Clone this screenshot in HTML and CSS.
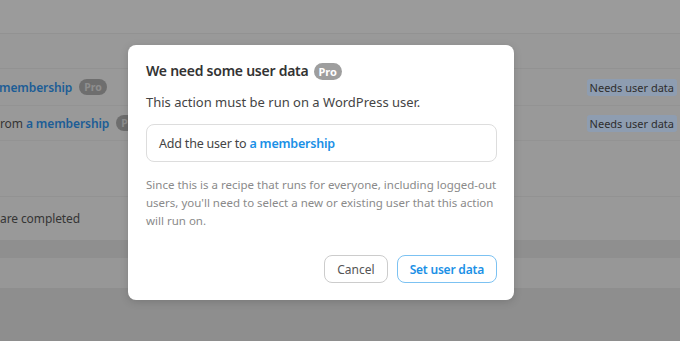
FILE: index.html
```html
<!DOCTYPE html>
<html lang="en">
<head>
<meta charset="utf-8">
<title>Recipe</title>
<link rel="stylesheet" href="styles.css">
</head>
<body>
<div class="page">
  <div class="topbar"></div>
  <div class="subbar"></div>
  <div class="row row-a">
    <div class="row-text"><span class="link">membership</span><span class="badge">Pro</span></div>
    <span class="tag">Needs user data</span>
  </div>
  <div class="row row-b">
    <div class="row-text">rom <span class="link">a membership</span><span class="badge">Pro</span></div>
    <span class="tag">Needs user data</span>
  </div>
  <div class="gap-block"></div>
  <div class="row row-c">
    <div class="row-text">are completed</div>
  </div>
  <div class="band"></div>
  <div class="band-light"></div>
  <div class="rest"></div>
</div>

<div class="modal">
  <div class="modal-title">We need some user data <span class="pill">Pro</span></div>
  <p class="modal-lead">This action must be run on a WordPress user.</p>
  <div class="action-box">Add the user to <span class="action-link">a membership</span></div>
  <p class="modal-note">Since this is a recipe that runs for everyone, including <span class="nowrap">logged-out</span> users, you'll need to select a new or existing user that this action will run on.</p>
  <div class="modal-actions">
    <button class="btn btn-cancel">Cancel</button>
    <button class="btn btn-primary">Set user data</button>
  </div>
</div>
</body>
</html>
```
FILE: styles.css
```css
html, body {
  margin: 0;
  padding: 0;
  height: 100%;
}
body {
  background: #8e8e8e;
  font-family: "Noto Sans", "Open Sans", sans-serif;
  overflow: hidden;
}
.page {
  display: flex;
  flex-direction: column;
  height: 341px;
}
.topbar {
  height: 33px;
  background: #9b9b9b;
  border-bottom: 1px solid #929292;
}
.subbar {
  height: 34px;
  background: #999999;
  border-bottom: 1px solid #929292;
}
.row {
  display: flex;
  align-items: center;
  justify-content: space-between;
  background: #999999;
  border-bottom: 1px solid #939393;
  padding-right: 3px;
  font-size: 12px;
  letter-spacing: -0.1px;
  color: #353535;
}
.row-a { height: 36px; }
.row-b { height: 34px; }
.row-c { height: 43px; border-bottom: none; }
.row-text {
  display: flex;
  align-items: center;
  white-space: pre;
}
.row-a .row-text { margin-left: -1px; }
.link {
  color: #1c5d96;
  font-weight: 600;
}
.badge {
  display: inline-block;
  margin-left: 7px;
  background: #6e6e6e;
  color: #8e8e8e;
  font-size: 10.5px;
  font-weight: 700;
  letter-spacing: 0;
  line-height: 16px;
  padding: 0 5px;
  border-radius: 8px;
}
.tag {
  background: #8e9db1;
  color: #2e2e2e;
  font-size: 11px;
  letter-spacing: 0;
  line-height: 17px;
  padding: 0 3px;
  border-radius: 3px;
}
.gap-block {
  height: 55px;
  background: #999999;
  border-bottom: 1px solid #929292;
}
.band {
  height: 18px;
  background: #8f8f8f;
}
.band-light {
  height: 30px;
  background: #979797;
}
.rest {
  flex: 1;
  background: #8e8e8e;
}

.modal {
  position: absolute;
  left: 128px;
  top: 45px;
  width: 386px;
  height: 255px;
  box-sizing: border-box;
  padding: 15px 12px 0 18px;
  background: #ffffff;
  border-radius: 8px;
  box-shadow: 0 2px 8px rgba(0, 0, 0, 0.15);
  display: flex;
  flex-direction: column;
}
.modal-title {
  display: flex;
  align-items: center;
  gap: 5px;
  font-size: 14px;
  letter-spacing: -0.25px;
  font-weight: 600;
  color: #333333;
  line-height: 22px;
}
.pill {
  background: #9e9e9e;
  color: #ffffff;
  font-size: 11px;
  font-weight: 700;
  letter-spacing: 0;
  line-height: 17px;
  padding: 0 5px;
  border-radius: 9px;
}
.modal-lead {
  margin: 11px 0 0;
  font-size: 13px;
  line-height: 18px;
  color: #444444;
}
.action-box {
  margin-top: 13px;
  margin-right: 5px;
  height: 38px;
  box-sizing: border-box;
  border: 1px solid #dddddd;
  border-radius: 8px;
  padding: 0 12px;
  display: flex;
  align-items: center;
  white-space: pre;
  font-size: 12.5px;
  letter-spacing: -0.2px;
  color: #444444;
}
.action-link {
  color: #1a90e6;
  font-weight: 600;
}
.modal-note {
  margin: 14px 0 0 0;
  font-size: 11.5px;
  line-height: 18px;
  color: #8a8a8a;
}
.nowrap {
  white-space: nowrap;
}
.modal-actions {
  margin-top: auto;
  margin-bottom: 17px;
  margin-right: 5px;
  display: flex;
  justify-content: flex-end;
  gap: 9px;
}
.btn {
  height: 28px;
  box-sizing: border-box;
  border-radius: 8px;
  background: #ffffff;
  font-family: inherit;
  font-size: 12px;
  padding: 0 12px;
  cursor: pointer;
}
.btn-cancel {
  border: 1px solid #cccccc;
  color: #555555;
}
.btn-primary {
  border: 1px solid #7cc2f2;
  color: #1a90e6;
  font-weight: 600;
  letter-spacing: -0.2px;
}
```
